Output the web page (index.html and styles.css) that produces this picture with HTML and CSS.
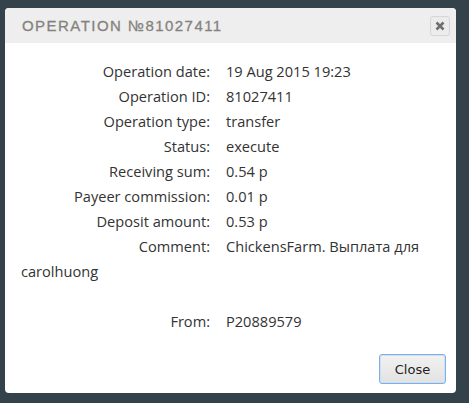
FILE: index.html
```html
<!DOCTYPE html>
<html>
<head>
<meta charset="utf-8">
<link rel="stylesheet" href="styles.css">
</head>
<body>
<div class="dialog">
  <div class="header">
    <div class="title">OPERATION №81027411</div>
    <button class="x-btn" aria-label="close">
      <svg width="10" height="10" viewBox="0 0 10 10"><path d="M1.5 1.5 L8.5 8.5 M8.5 1.5 L1.5 8.5" stroke="#6f6f6f" stroke-width="2.6" stroke-linecap="butt"/></svg>
    </button>
  </div>
  <div class="body">
    <div class="row"><span class="lbl">Operation date:</span><span class="val">19 Aug 2015 19:23</span></div>
    <div class="row"><span class="lbl">Operation ID:</span><span class="val">81027411</span></div>
    <div class="row"><span class="lbl">Operation type:</span><span class="val">transfer</span></div>
    <div class="row"><span class="lbl">Status:</span><span class="val">execute</span></div>
    <div class="row"><span class="lbl">Receiving sum:</span><span class="val">0.54 р</span></div>
    <div class="row"><span class="lbl">Payeer commission:</span><span class="val">0.01 р</span></div>
    <div class="row"><span class="lbl">Deposit amount:</span><span class="val">0.53 р</span></div>
    <div class="row"><span class="lbl">Comment:</span><span class="val">ChickensFarm. Выплата для</span></div>
    <div class="row"><span class="val">carolhuong</span></div>
    <div class="row gap"><span class="lbl">From:</span><span class="val">P20889579</span></div>
  </div>
  <div class="footer">
    <button class="close">Close</button>
  </div>
</div>
</body>
</html>
```
FILE: styles.css
```css
html, body {
  margin: 0;
  padding: 0;
}
body {
  background: #34434b;
  width: 469px;
  height: 403px;
  overflow: hidden;
  padding: 8px 0 0 5px;
  box-sizing: border-box;
}
.dialog {
  width: 451px;
  height: 385px;
  background: #fff;
  border-radius: 4px;
  overflow: hidden;
  display: flex;
  flex-direction: column;
}
.header {
  height: 35px;
  background: #eeeeee;
  display: flex;
  align-items: center;
  justify-content: space-between;
  padding: 0 6px 0 17px;
}
.title {
  font-family: "Liberation Sans", sans-serif;
  font-size: 15px;
  letter-spacing: 1.45px;
  color: #85827d;
  -webkit-text-stroke: 0.3px #85827d;
}
.x-btn {
  width: 20px;
  height: 20px;
  padding: 0;
  margin: 0;
  border: 1px solid #d6d6d6;
  border-radius: 3px;
  background: #ececec;
  display: flex;
  align-items: center;
  justify-content: center;
}
.body {
  padding: 16px 16px 0 16px;
  font-family: "Open Sans", sans-serif;
  font-size: 14.6px;
  line-height: 25px;
  color: #333;
  flex: 1;
}
.lbl {
  display: inline-block;
  width: 189px;
  text-align: right;
  padding-right: 16px;
}
.gap {
  margin-top: 25px;
}
.footer {
  display: flex;
  justify-content: flex-end;
  padding: 0 10px 9px 0;
}
.close {
  width: 67px;
  height: 30px;
  font-family: "DejaVu Sans", sans-serif;
  font-size: 13px;
  color: #222;
  border: 1px solid #7eaee6;
  border-radius: 3px;
  background: linear-gradient(#f2f2f2, #e2e2e2);
  box-shadow: inset 0 0 0 1px #cfe0f5;
  padding: 0;
}
```
